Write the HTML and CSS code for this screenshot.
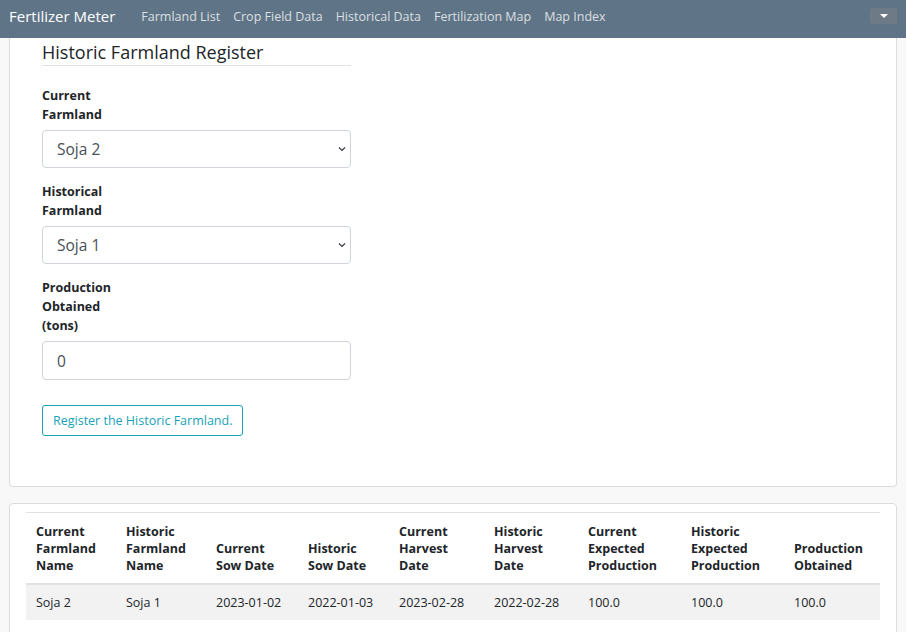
FILE: index.html
```html
<!DOCTYPE html>
<html>
<head>
<meta charset="utf-8">
<link rel="stylesheet" href="styles.css">
</head>
<body>
<nav class="navbar">
  <span class="brand">Fertilizer Meter</span>
  <ul class="nav-links">
    <li>Farmland List</li>
    <li>Crop Field Data</li>
    <li>Historical Data</li>
    <li>Fertilization Map</li>
    <li>Map Index</li>
  </ul>
  <button class="dropdown-toggle" aria-label="menu"><span class="caret"></span></button>
</nav>
<main class="page">
  <section class="card card-form">
    <form class="form">
      <h2 class="form-title">Historic Farmland Register</h2>
      <div class="field">
        <label class="label">Current Farmland</label>
        <div class="select">Soja 2<svg class="chev" width="8" height="6" viewBox="0 0 8 6"><path d="M1 1.5 L4 4.5 L7 1.5" fill="none" stroke="#343a40" stroke-width="1.2"/></svg></div>
      </div>
      <div class="field">
        <label class="label">Historical Farmland</label>
        <div class="select">Soja 1<svg class="chev" width="8" height="6" viewBox="0 0 8 6"><path d="M1 1.5 L4 4.5 L7 1.5" fill="none" stroke="#343a40" stroke-width="1.2"/></svg></div>
      </div>
      <div class="field">
        <label class="label">Production Obtained (tons)</label>
        <div class="input">0</div>
      </div>
      <button type="button" class="btn-outline">Register the Historic Farmland.</button>
    </form>
  </section>
  <section class="card card-table">
    <table class="table">
      <thead>
        <tr>
          <th>Current Farmland Name</th>
          <th>Historic Farmland Name</th>
          <th>Current Sow Date</th>
          <th>Historic Sow Date</th>
          <th>Current Harvest Date</th>
          <th>Historic Harvest Date</th>
          <th>Current Expected Production</th>
          <th>Historic Expected Production</th>
          <th>Production Obtained</th>
        </tr>
      </thead>
      <tbody>
        <tr>
          <td>Soja 2</td>
          <td>Soja 1</td>
          <td>2023-01-02</td>
          <td>2022-01-03</td>
          <td>2023-02-28</td>
          <td>2022-02-28</td>
          <td>100.0</td>
          <td>100.0</td>
          <td>100.0</td>
        </tr>
      </tbody>
    </table>
  </section>
</main>
</body>
</html>
```
FILE: styles.css
```css
* { box-sizing: border-box; }
html, body { margin: 0; padding: 0; }
body {
  font-family: "Open Sans", "Noto Sans", sans-serif;
  color: #212529;
  background: #f8f8f8;
  width: 906px;
  height: 632px;
  overflow: hidden;
}
.navbar {
  height: 38px;
  background: #5f7587;
  display: flex;
  align-items: center;
  padding: 0 9px 6px;
}
.brand {
  color: #fff;
  font-size: 15px;
  margin-right: 26px;
  white-space: nowrap;
}
.nav-links {
  list-style: none;
  display: flex;
  gap: 13px;
  margin: 0;
  padding: 0;
  flex: 1;
}
.nav-links li {
  color: rgba(255,255,255,0.78);
  font-size: 12.5px;
  white-space: nowrap;
}
.dropdown-toggle {
  width: 27px;
  height: 16px;
  margin-top: -1px;
  border: 0;
  border-radius: 3px;
  background: #6e7a85;
  display: flex;
  align-items: center;
  justify-content: center;
  padding: 0;
}
.caret {
  width: 0; height: 0;
  border-left: 4px solid transparent;
  border-right: 4px solid transparent;
  border-top: 4px solid #fff;
}
.page {
  padding: 0 9px;
  display: flex;
  flex-direction: column;
  gap: 16px;
}
.card {
  background: #fff;
  border: 1px solid #dcdcdc;
  border-radius: 4px;
}
.card-form {
  border-top: 0;
  border-top-left-radius: 0;
  border-top-right-radius: 0;
  padding: 0 32px 50px;
  height: 449px;
}
.form { width: 309px; }
.form-title {
  margin: 0;
  padding-top: 1px;
  font-size: 18px;
  font-weight: 400;
  line-height: 26px;
  border-bottom: 1px solid #dee2e6;
  padding-bottom: 0;
}
.field { display: flex; flex-direction: column; }
.field:first-of-type { margin-top: 20px; }
.label {
  width: 80px;
  font-size: 12.5px;
  font-weight: 700;
  line-height: 19px;
  margin-bottom: 6px;
}
.select, .input {
  height: 38px;
  border: 1px solid #ced4da;
  border-radius: 4px;
  font-size: 15.5px;
  color: #495057;
  padding: 0 14px;
  display: flex;
  align-items: center;
  justify-content: space-between;
  margin-bottom: 14px;
}
.input { height: 39px; }
.chev { margin-right: -10px; }
.btn-outline {
  margin-top: 11px;
  height: 31px;
  padding: 0 10px;
  border: 1px solid #17a2b8;
  border-radius: 3px;
  background: #fff;
  color: #17a2b8;
  font-family: inherit;
  font-size: 12.5px;
}
.card-table {
  padding: 8px 16px;
  height: 140px;
}
.table {
  width: 100%;
  border-collapse: collapse;
  font-size: 12.5px;
  border-top: 1px solid #dee2e6;
}
.table th {
  text-align: left;
  vertical-align: bottom;
  font-weight: 700;
  line-height: 17px;
  padding: 10px 10px 9px;
  border-bottom: 2px solid #dee2e6;
}
.table td {
  background: #f2f2f2;
  padding: 0 10px;
  height: 36px;
  line-height: 17px;
}
.table th:nth-child(1) { width: 90px; }
.table th:nth-child(2) { width: 90px; }
.table th:nth-child(3) { width: 92px; }
.table th:nth-child(4) { width: 91px; }
.table th:nth-child(5) { width: 95px; }
.table th:nth-child(6) { width: 94px; }
.table th:nth-child(7) { width: 103px; }
.table th:nth-child(8) { width: 103px; }
```
